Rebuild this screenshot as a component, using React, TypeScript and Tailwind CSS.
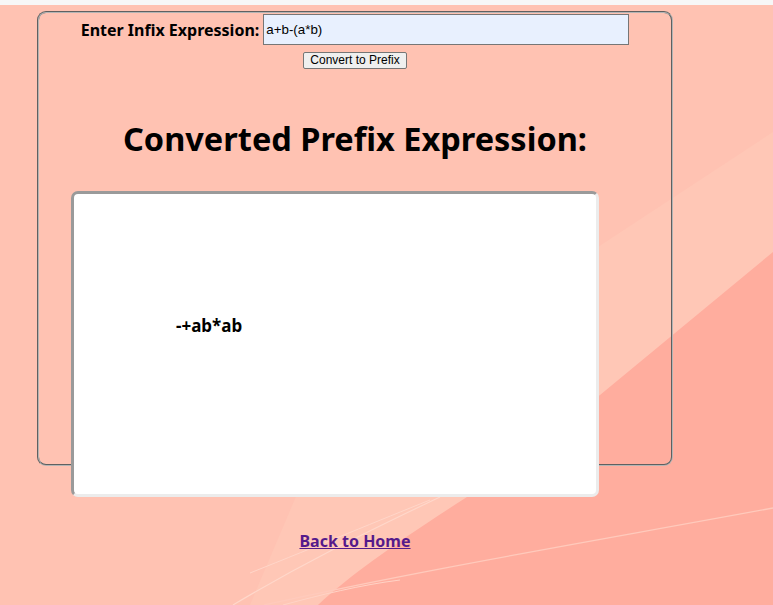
import { useState } from "react";

// Prefix conversion page, laid over a pink wallpaper
function Wallpaper() {
  return (
    <svg
      className="absolute inset-0 h-full w-full"
      viewBox="0 0 773 605"
      preserveAspectRatio="none"
      aria-hidden="true"
    >
      <rect width="773" height="605" fill="#ffc2b2" />
      {/* light diagonal band */}
      <path d="M773 132 L560 272 L320 440 L250 605 L773 605 Z" fill="#ffc7b6" />
      {/* darker lower right */}
      <path d="M773 252 L600 395 C540 440 500 470 467 497 C400 540 350 575 318 605 L773 605 Z" fill="#ffad9e" />
      {/* thin curves */}
      <path d="M233 605 C300 565 360 535 440 497" stroke="#ffd8cb" strokeWidth="1.1" fill="none" />
      <path d="M250 573 C320 545 380 520 430 500" stroke="#ffd6c9" strokeWidth="1" fill="none" />
      <path d="M283 605 C320 595 360 585 400 580" stroke="#ffd3c6" strokeWidth="1" fill="none" />
      <path d="M264 605 C420 570 600 540 773 508" stroke="#ffcabc" strokeWidth="1.3" fill="none" />
    </svg>
  );
}

export default function App() {
  const [infix, setInfix] = useState("a+b-(a*b)");

  return (
    <div className="relative min-h-screen w-full overflow-hidden font-['Noto_Sans',sans-serif]">
      <div className="relative h-[605px]">
        <Wallpaper />
        <div className="relative h-[5px] bg-[#f7f7f7]" />
        <div className="relative pl-[37px] pt-[6px]">
          <div className="h-[455px] w-[636px] rounded-[9px] border-2 border-[#b4b4b4] [border-style:groove]">
            <div className="flex items-center justify-center gap-[4px] pt-[1px]">
              <label className="text-[16px] font-bold text-black">Enter Infix Expression:</label>
              <input
                type="text"
                value={infix}
                onChange={(e) => setInfix(e.target.value)}
                className="h-[31px] w-[366px] border border-[#767676] bg-[#e8f0fe] px-[2px] font-['Liberation_Sans',Arial,sans-serif] text-[13.33px] text-black outline-none"
              />
            </div>
            <div className="mt-[7px] flex justify-center">
              <button className="h-[17px] rounded-[2px] border border-[#767676] bg-[#efefef] px-[6px] font-['Liberation_Sans',Arial,sans-serif] text-[12px] leading-[15px] text-black">
                Convert to Prefix
              </button>
            </div>
            <h2 className="mt-[50px] text-center text-[32.5px] leading-[40px] font-bold text-black">
              Converted Prefix Expression:
            </h2>
            <div className="ml-[32px] mt-[32px] h-[306px] w-[528px] rounded-[7px] border-[3px] border-t-[#9a9a9a] border-l-[#9a9a9a] border-r-[#ececec] border-b-[#ececec] bg-white pl-[102px] pt-[120px]">
              <p className="text-[17px] leading-[24px] font-bold text-black">-+ab*ab</p>
            </div>
          </div>
          <div className="w-[636px] pt-[63px] text-center">
            <a href="#" className="text-[16px] font-bold text-[#551a8b] underline">
              Back to Home
            </a>
          </div>
        </div>
      </div>
    </div>
  );
}
